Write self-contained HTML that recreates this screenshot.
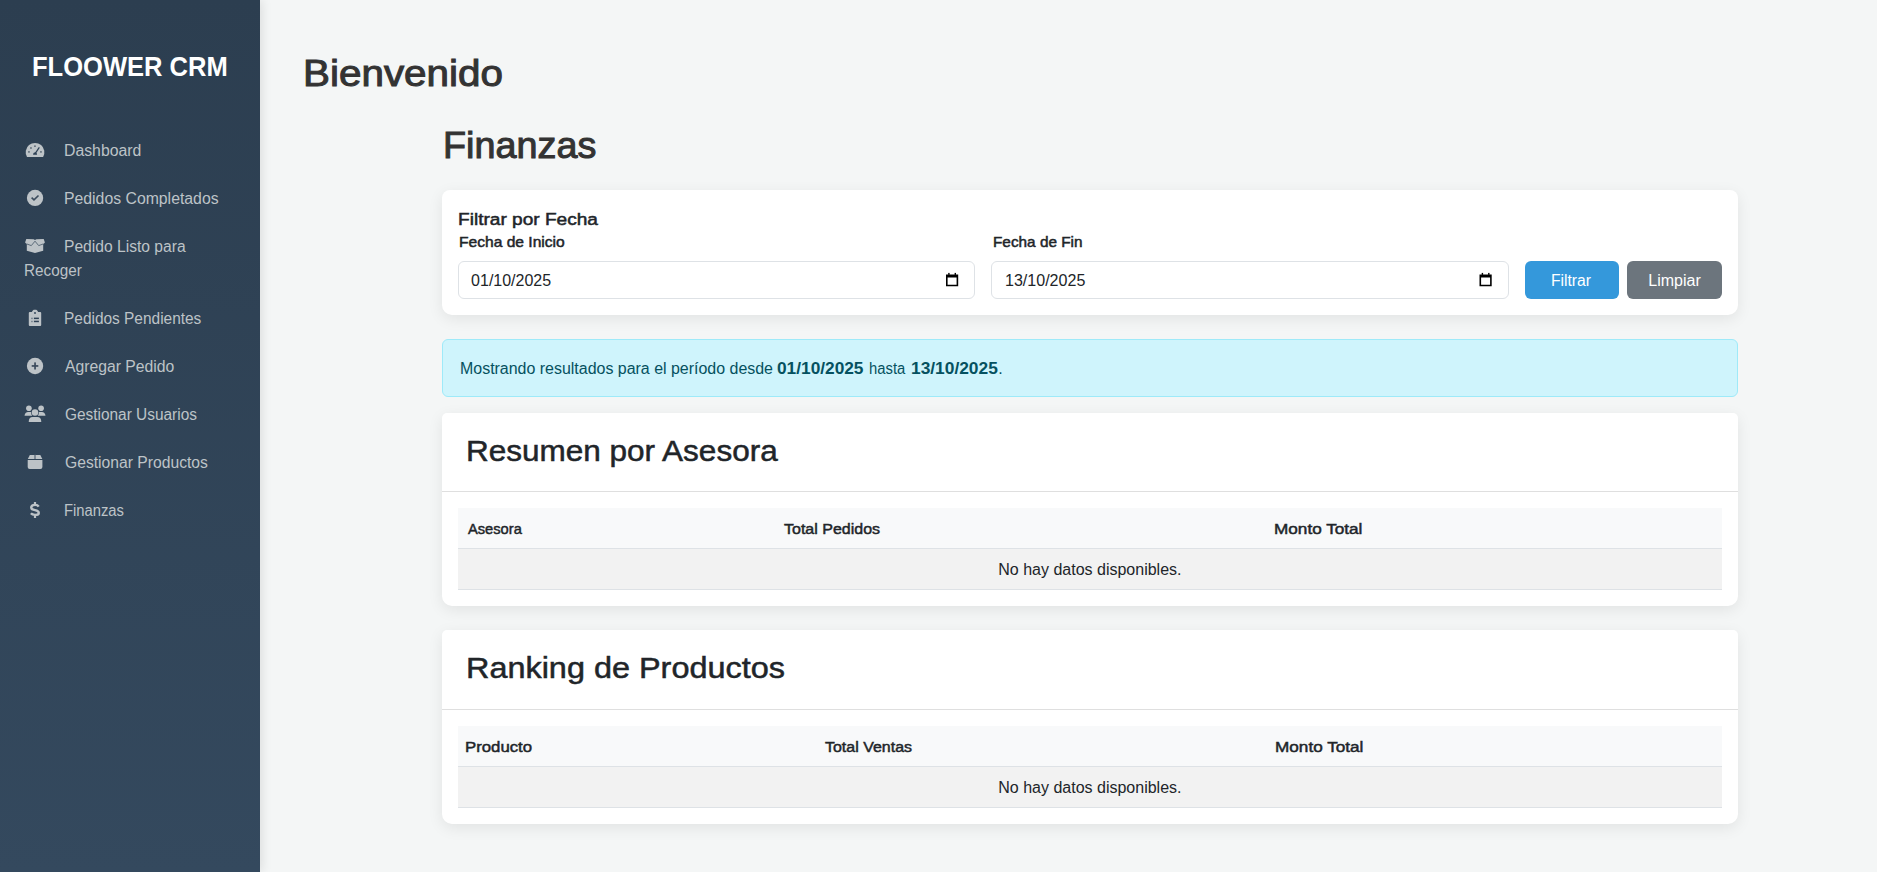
<!DOCTYPE html>
<html lang="es"><head><meta charset="utf-8"><title>FLOOWER CRM - Finanzas</title>
<style>
html,body{margin:0;padding:0;}
body{width:1877px;height:872px;overflow:hidden;position:relative;background:#f4f6f6;font-family:"Liberation Sans",sans-serif;}
.t{position:absolute;line-height:1;white-space:nowrap;}
.box{position:absolute;box-sizing:border-box;}
#side{left:0;top:0;width:260px;height:872px;background:linear-gradient(180deg,#2c3e50 0%,#34495e 100%);box-shadow:2px 0 10px rgba(0,0,0,0.1);z-index:1;}
.card{background:#fff;border-radius:10px;box-shadow:0 4px 15px rgba(0,0,0,0.08);}
.inp{background:#fff;border:1px solid #dee2e6;border-radius:6px;}
.btn{border-radius:6px;}
.hr{position:absolute;height:1px;background:#dee2e6;}
svg{position:absolute;overflow:visible;}
.t, svg{z-index:2;}
</style></head><body>
<div class="box" id="side"></div>
<svg width="1877" height="872" style="left:0;top:0;" viewBox="0 0 1877 872">
 <g fill="#bdc3c7">
  <!-- gauge -->
  <path d="M27.0,157 A9.35,9.35 0 1 1 43.1,157 Z"/>
  <!-- check circle -->
  <circle cx="35.05" cy="197.9" r="8.15"/>
  <!-- box open -->
  <path d="M26.3,239 L33.6,239.3 L35,240 L36.4,239.3 L43.7,239 L44.9,242.5 L43.2,244.3 L43.2,250.8 L35,253 L26.8,250.8 L26.8,244.3 L25.1,242.5 Z"/>
  <!-- clipboard list -->
  <path d="M29.8,311.9 L31.8,311.9 L33,310.2 Q33.3,309.8 33.8,309.8 L36.2,309.8 Q36.7,309.8 37,310.2 L38.2,311.9 L40.2,311.9 Q41.2,311.9 41.2,312.9 L41.2,325 Q41.2,326 40.2,326 L29.8,326 Q28.8,326 28.8,325 L28.8,312.9 Q28.8,311.9 29.8,311.9 Z"/>
  <!-- plus circle -->
  <circle cx="35.05" cy="366" r="8.15"/>
  <!-- users -->
  <circle cx="28.9" cy="408.3" r="2.8"/>
  <circle cx="41.1" cy="408.3" r="2.8"/>
  <path d="M24.5,415.8 Q24.9,412 28.2,412 L32.5,412 L32.5,415.8 Z"/>
  <path d="M45.5,415.8 Q45.1,412 41.8,412 L37.5,412 L37.5,415.8 Z"/>
  <circle cx="35" cy="412.6" r="3.25" stroke="#2e4155" stroke-width="1.3" paint-order="stroke"/>
  <path d="M28.7,422 Q28.7,416.9 32.6,416.9 L37.4,416.9 Q41.3,416.9 41.3,422 Z" stroke="#2e4155" stroke-width="1.2" paint-order="stroke"/>
  <!-- box -->
  <path d="M29.8,454.9 L34.3,454.9 L34.3,459 L27.8,459 Z"/>
  <path d="M40.3,454.9 L35.8,454.9 L35.8,459 L42.3,459 Z"/>
  <rect x="34.3" y="454.9" width="1.5" height="4.1" fill="#8a95a0"/>
  <path d="M27.7,460 L42.4,460 L42.4,467 Q42.4,469 40.4,469 L29.7,469 Q27.7,469 27.7,467 Z"/>
 </g>
 <g fill="none" stroke="#bdc3c7" stroke-width="2.35" stroke-linecap="butt">
  <path d="M38.7,506.6 C38.1,505.5 36.8,504.9 35,504.9 C32.6,504.9 31.2,506 31.2,507.6 C31.2,509.3 32.7,509.8 35,510.2 C37.3,510.6 38.8,511.3 38.8,512.9 C38.8,514.4 37.2,514.9 35,514.9 C33.1,514.9 31.7,514.3 30.9,513.3"/>
  <path d="M35,501.9 L35,504.5 M35,515.3 L35,517.9" stroke-width="2.2"/>
 </g>
 <g fill="#2e4155">
  <g fill="#5f6c79">
  <rect x="28.1" y="151.1" width="1.7" height="1.6"/>
  <rect x="30.1" y="147.2" width="1.7" height="1.6"/>
  <rect x="34.1" y="145.4" width="1.7" height="1.6"/>
  <rect x="40.1" y="151.1" width="1.7" height="1.6"/>
  </g>
  <path d="M33,154.7 Q33,152.2 35.1,152.2 Q37.1,152.2 37.1,154.7 Z"/>
  <rect x="31.2" y="317.7" width="1.5" height="1.4" opacity="0.55"/>
  <rect x="33.9" y="317.6" width="5" height="1.5"/>
  <rect x="31.2" y="320.8" width="1.5" height="1.4" opacity="0.55"/>
  <rect x="33.9" y="320.7" width="5" height="1.5"/>
  <circle cx="35" cy="313" r="0.9"/>
  <rect x="31.7" y="365.1" width="6.6" height="1.7" fill="#3b4b5c"/>
  <rect x="34.2" y="362.4" width="1.7" height="7.1" fill="#3b4b5c"/>
 </g>
 <g fill="none" stroke="#2e4155">
  <path d="M26.6,243.9 L31.3,245.6 L35,241.2 L38.7,245.6 L43.4,243.9" stroke-width="0.85" opacity="0.8"/>
  <path d="M35.3,153.3 L39.3,147.4" stroke-width="1.2"/>
  <path d="M31.6,197.6 L34,199.9 L38.5,195.5" stroke-width="1.6" stroke="#3b4b5c"/>
 </g>
</svg>

<!-- filter card -->
<div class="box card" style="left:442px;top:190px;width:1296px;height:125px;border-radius:8px 8px 10px 10px;"></div>
<div class="box inp" style="left:458px;top:261px;width:517.33px;height:38px;"></div>
<div class="box inp" style="left:991.33px;top:261px;width:517.33px;height:38px;"></div>
<svg width="1877" height="872" style="left:0;top:0;" viewBox="0 0 1877 872">
 <g fill="#000">
  <path fill-rule="evenodd" d="M946,274.5 L958.2,274.5 L958.2,286.3 L946,286.3 Z M947.6,277.6 L956.6,277.6 L956.6,284.7 L947.6,284.7 Z"/>
  <rect x="948.2" y="272.9" width="1.4" height="2"/>
  <rect x="954.6" y="272.9" width="1.4" height="2"/>
  <path fill-rule="evenodd" d="M1479.5,274.5 L1491.7,274.5 L1491.7,286.3 L1479.5,286.3 Z M1481.1,277.6 L1490.1,277.6 L1490.1,284.7 L1481.1,284.7 Z"/>
  <rect x="1481.7" y="272.9" width="1.4" height="2"/>
  <rect x="1488.1" y="272.9" width="1.4" height="2"/>
 </g>
</svg>
<div class="box btn" style="left:1525px;top:261px;width:94px;height:38px;background:#3498db;"></div>
<div class="box btn" style="left:1627px;top:261px;width:95px;height:38px;background:#6c757d;"></div>

<!-- alert -->
<div class="box" style="left:442px;top:339px;width:1296px;height:58px;background:#cff4fc;border:1px solid #9eeaf9;border-radius:6px;"></div>

<!-- card 2 -->
<div class="box card" style="left:442px;top:413px;width:1296px;height:193px;border-radius:5px 5px 10px 10px;"></div>
<div class="hr" style="left:442px;top:491px;width:1296px;background:#dfdfdf;"></div>
<div class="box" style="left:458px;top:508px;width:1264px;height:40px;background:#f8f9fa;"></div>
<div class="hr" style="left:458px;top:548px;width:1264px;"></div>
<div class="box" style="left:458px;top:549px;width:1264px;height:40px;background:#f2f2f2;"></div>
<div class="hr" style="left:458px;top:589px;width:1264px;"></div>

<!-- card 3 -->
<div class="box card" style="left:442px;top:630px;width:1296px;height:194px;border-radius:5px 5px 10px 10px;"></div>
<div class="hr" style="left:442px;top:709px;width:1296px;background:#dfdfdf;"></div>
<div class="box" style="left:458px;top:726px;width:1264px;height:40px;background:#f8f9fa;"></div>
<div class="hr" style="left:458px;top:766px;width:1264px;"></div>
<div class="box" style="left:458px;top:767px;width:1264px;height:40px;background:#f2f2f2;"></div>
<div class="hr" style="left:458px;top:807px;width:1264px;"></div>

<div class="t" id="brand" style="left:32.34px;top:53px;font-size:28px;font-weight:bold;color:#ffffff;transform:scale(0.9117,1.0000);transform-origin:0 23px;">FLOOWER CRM</div>
<div class="t" id="dash" style="left:64.20px;top:143px;font-size:16px;font-weight:normal;color:#bdc3c7;transform:scale(0.9874,1.0000);transform-origin:0 13px;">Dashboard</div>
<div class="t" id="comp" style="left:64.20px;top:191px;font-size:16px;font-weight:normal;color:#bdc3c7;transform:scale(0.9874,1.0000);transform-origin:0 13px;">Pedidos Completados</div>
<div class="t" id="listo" style="left:64.20px;top:239px;font-size:16px;font-weight:normal;color:#bdc3c7;transform:scale(0.9764,1.0000);transform-origin:0 13px;">Pedido Listo para</div>
<div class="t" id="pend" style="left:64.20px;top:311px;font-size:16px;font-weight:normal;color:#bdc3c7;transform:scale(0.9648,1.0000);transform-origin:0 13px;">Pedidos Pendientes</div>
<div class="t" id="agreg" style="left:65.00px;top:359px;font-size:16px;font-weight:normal;color:#bdc3c7;transform:scale(0.9820,1.0000);transform-origin:0 13px;">Agregar Pedido</div>
<div class="t" id="usu" style="left:65.00px;top:407px;font-size:16px;font-weight:normal;color:#bdc3c7;transform:scale(0.9633,1.0000);transform-origin:0 13px;">Gestionar Usuarios</div>
<div class="t" id="prod" style="left:65.00px;top:455px;font-size:16px;font-weight:normal;color:#bdc3c7;transform:scale(0.9798,1.0000);transform-origin:0 13px;">Gestionar Productos</div>
<div class="t" id="fin" style="left:64.20px;top:503px;font-size:16px;font-weight:normal;color:#bdc3c7;transform:scale(0.9236,1.0000);transform-origin:0 13px;">Finanzas</div>
<div class="t" id="recoger" style="left:24.34px;top:263px;font-size:16px;font-weight:normal;color:#bdc3c7;transform:scale(0.9545,1.0000);transform-origin:0 13px;">Recoger</div>
<div class="t" id="bien" style="left:303.46px;top:52px;font-size:40px;font-weight:normal;color:#333333;transform:scale(1.0102,0.9430);transform-origin:0 34px;-webkit-text-stroke:1.1px #333333;">Bienvenido</div>
<div class="t" id="finz" style="left:442.58px;top:124px;font-size:40px;font-weight:normal;color:#333333;transform:scale(0.9446,0.9430);transform-origin:0 34px;-webkit-text-stroke:1.1px #333333;">Finanzas</div>
<div class="t" id="filt" style="left:458.22px;top:210px;font-size:18px;font-weight:normal;color:#212529;transform:scale(1.0602,0.9500);transform-origin:0 15px;-webkit-text-stroke:0.55px #212529;">Filtrar por Fecha</div>
<div class="t" id="fini" style="left:459.00px;top:234px;font-size:15px;font-weight:normal;color:#212529;transform:scale(1.0396,0.9400);transform-origin:0 13px;-webkit-text-stroke:0.5px #212529;">Fecha de Inicio</div>
<div class="t" id="ffin" style="left:992.50px;top:234px;font-size:15px;font-weight:normal;color:#212529;transform:scale(1.0229,0.9400);transform-origin:0 13px;-webkit-text-stroke:0.5px #212529;">Fecha de Fin</div>
<div class="t" id="d1" style="left:471.08px;top:273px;font-size:16px;font-weight:normal;color:#212529;">01/10/2025</div>
<div class="t" id="d2" style="left:1004.86px;top:273px;font-size:16px;font-weight:normal;color:#212529;transform:scale(1.0029,1.0000);transform-origin:0 13px;">13/10/2025</div>
<div class="t" id="bf" style="left:1551.32px;top:273px;font-size:16px;font-weight:normal;color:#ffffff;transform:scale(0.9783,1.0000);transform-origin:0 13px;">Filtrar</div>
<div class="t" id="bl" style="left:1648.26px;top:273px;font-size:16px;font-weight:normal;color:#ffffff;">Limpiar</div>
<div class="t" id="al1" style="left:459.50px;top:361px;font-size:16px;font-weight:normal;color:#055160;transform:scale(0.9968,1.0000);transform-origin:0 13px;">Mostrando resultados para el período desde</div>
<div class="t" id="al2" style="left:777.02px;top:361px;font-size:16px;font-weight:bold;color:#055160;transform:scale(1.0800,1.0000);transform-origin:0 13px;">01/10/2025</div>
<div class="t" id="al3" style="left:869.46px;top:361px;font-size:16px;font-weight:normal;color:#055160;transform:scale(0.9260,1.0000);transform-origin:0 13px;">hasta</div>
<div class="t" id="al4" style="left:910.68px;top:361px;font-size:16px;font-weight:bold;color:#055160;transform:scale(1.0839,1.0000);transform-origin:0 13px;">13/10/2025</div>
<div class="t" id="al5" style="left:998.30px;top:361px;font-size:16px;font-weight:normal;color:#055160;">.</div>
<div class="t" id="res" style="left:466.40px;top:434px;font-size:32px;font-weight:normal;color:#212529;transform:scale(0.9844,0.9500);transform-origin:0 27px;-webkit-text-stroke:0.55px #212529;">Resumen por Asesora</div>
<div class="t" id="ases" style="left:467.72px;top:521px;font-size:16px;font-weight:normal;color:#212529;transform:scale(0.9163,0.9600);transform-origin:0 13px;-webkit-text-stroke:0.5px #212529;">Asesora</div>
<div class="t" id="totp" style="left:783.98px;top:521px;font-size:16px;font-weight:normal;color:#212529;transform:scale(1.0003,0.9600);transform-origin:0 13px;-webkit-text-stroke:0.5px #212529;">Total Pedidos</div>
<div class="t" id="mont" style="left:1274.34px;top:521px;font-size:16px;font-weight:normal;color:#212529;transform:scale(1.0730,0.9600);transform-origin:0 13px;-webkit-text-stroke:0.5px #212529;">Monto Total</div>
<div class="t" id="nohay" style="left:998.26px;top:562px;font-size:16px;font-weight:normal;color:#212529;">No hay datos disponibles.</div>
<div class="t" id="rank" style="left:466.40px;top:651px;font-size:32px;font-weight:normal;color:#212529;transform:scale(1.0128,0.9500);transform-origin:0 27px;-webkit-text-stroke:0.55px #212529;">Ranking de Productos</div>
<div class="t" id="prodh" style="left:465.22px;top:739px;font-size:16px;font-weight:normal;color:#212529;transform:scale(1.0476,0.9600);transform-origin:0 13px;-webkit-text-stroke:0.5px #212529;">Producto</div>
<div class="t" id="totv" style="left:824.98px;top:739px;font-size:16px;font-weight:normal;color:#212529;transform:scale(0.9979,0.9600);transform-origin:0 13px;-webkit-text-stroke:0.5px #212529;">Total Ventas</div>
<div class="t" id="mont2" style="left:1275.26px;top:739px;font-size:16px;font-weight:normal;color:#212529;transform:scale(1.0727,0.9600);transform-origin:0 13px;-webkit-text-stroke:0.5px #212529;">Monto Total</div>
<div class="t" id="nohay2" style="left:998.26px;top:780px;font-size:16px;font-weight:normal;color:#212529;">No hay datos disponibles.</div>
</body></html>
